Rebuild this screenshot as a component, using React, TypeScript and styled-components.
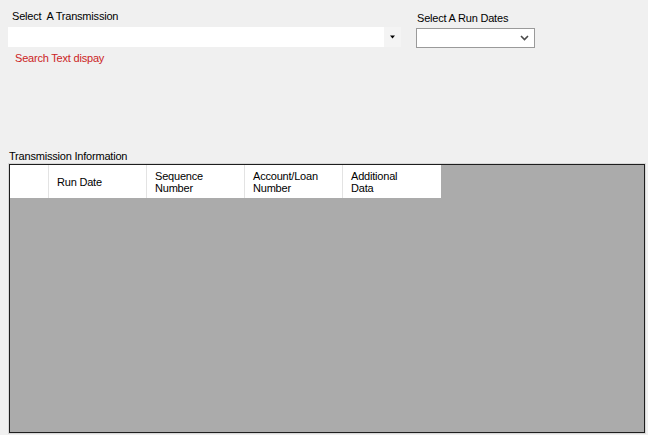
import React from "react";
import styled, { createGlobalStyle } from "styled-components";

const Global = createGlobalStyle`
  html, body { margin: 0; padding: 0; background: #f0f0f0; }
  body { font-family: "Liberation Sans", Arial, sans-serif; font-size: 11px; color: #000; }
`;

const Page = styled.div`
  width: 648px;
  height: 435px;
  background: #f0f0f0;
  display: flex;
  flex-direction: column;
  overflow: hidden;
`;

const Top = styled.div`
  display: flex;
  align-items: flex-start;
  height: 149px;
`;

const Field = styled.div<{ $ml: number; $pt: number; $w: number }>`
  margin-left: ${(p) => p.$ml}px;
  padding-top: ${(p) => p.$pt}px;
  width: ${(p) => p.$w}px;
  display: flex;
  flex-direction: column;
`;

const Label = styled.div<{ $ml?: number }>`
  line-height: 14px;
  height: 14px;
  margin-left: ${(p) => p.$ml ?? 0}px;
  white-space: pre;
  letter-spacing: -0.2px;
`;

const FlatCombo = styled.div`
  margin-top: 4px;
  height: 20px;
  display: flex;
  background: #fff;
`;

const ComboText = styled.div`
  flex: 1;
`;

const FlatButton = styled.div`
  width: 17px;
  background: #f4f4f4;
  display: flex;
  align-items: center;
  justify-content: center;
`;

const Hint = styled.div`
  margin-top: 4px;
  margin-left: 7px;
  line-height: 14px;
  color: #cc2424;
  letter-spacing: -0.2px;
`;

const Combo = styled.div`
  margin-top: 3px;
  height: 18px;
  border: 1px solid #9a9a9a;
  background: #fff;
  display: flex;
  justify-content: flex-end;
  align-items: center;
  padding-right: 5px;
`;

const Section = styled.div`
  margin-left: 9px;
  display: flex;
  flex-direction: column;
`;

const Grid = styled.div`
  width: 634px;
  height: 267px;
  border: 1px solid #1e1e1e;
  box-shadow: 0 0 0 1px #d8d8d8;
  background: #ababab;
  display: flex;
  flex-direction: column;
  align-items: flex-start;
  margin-top: 1px;
`;

const HeaderRow = styled.div`
  display: flex;
  height: 33px;
  background: #fff;
`;

const HeaderCell = styled.div<{ $w: number }>`
  width: ${(p) => p.$w}px;
  box-sizing: border-box;
  border-right: 1px solid #e3e3e3;
  padding-left: 8px;
  padding-top: 1px;
  display: flex;
  align-items: center;
  line-height: 12px;
  white-space: pre;
  letter-spacing: -0.2px;
  &:last-child { border-right: none; }
`;

const cols = ["Run Date", "Sequence\nNumber", "Account/Loan\nNumber", "Additional\nData"];

export default function App() {
  return (
    <Page>
      <Global />
      <Top>
        <Field $ml={8} $pt={9} $w={393}>
          <Label $ml={4}>{"Select  A Transmission"}</Label>
          <FlatCombo>
            <ComboText />
            <FlatButton>
              <svg width="6" height="4" viewBox="0 0 6 4">
                <path d="M0 0.5 H5 L2.5 3.5 Z" fill="#000" />
              </svg>
            </FlatButton>
          </FlatCombo>
          <Hint>Search Text dispay</Hint>
        </Field>
        <Field $ml={15} $pt={11} $w={119}>
          <Label $ml={1}>Select A Run Dates</Label>
          <Combo>
            <svg width="9" height="6" viewBox="0 0 9 6">
              <path d="M1 1 L4.5 4.5 L8 1" stroke="#4a4a4a" strokeWidth="1.6" fill="none" />
            </svg>
          </Combo>
        </Field>
      </Top>
      <Section>
        <Label>Transmission Information</Label>
        <Grid>
          <HeaderRow>
            <HeaderCell $w={39} />
            {cols.map((c) => (
              <HeaderCell key={c} $w={98}>
                {c}
              </HeaderCell>
            ))}
          </HeaderRow>
        </Grid>
      </Section>
    </Page>
  );
}
